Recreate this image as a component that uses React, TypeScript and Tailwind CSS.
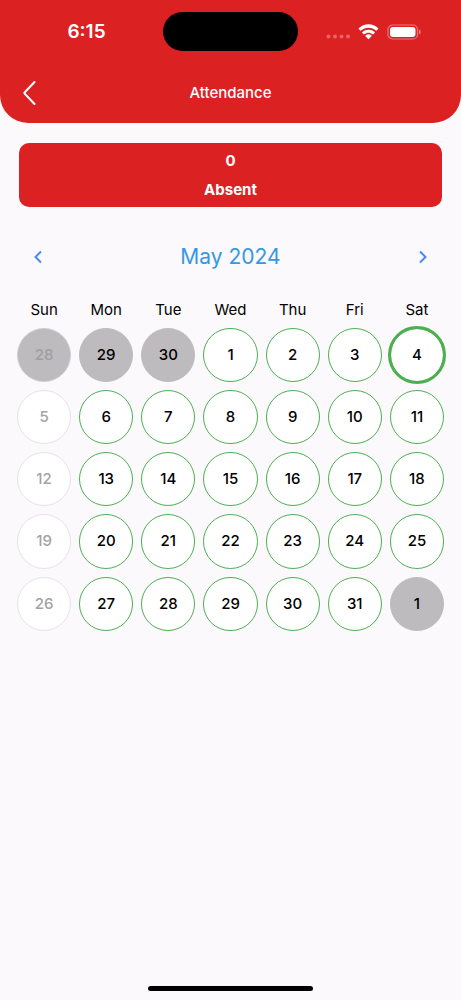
type DayState = "present" | "off" | "outside" | "outsideOff" | "today";

interface Day {
  date: number;
  month: string;
  state: DayState;
}

const WEEKDAYS = ["Sun", "Mon", "Tue", "Wed", "Thu", "Fri", "Sat"];

const DAY_STYLES: Record<DayState, string> = {
  present: "border border-[#4caf50] bg-white text-black",
  off: "border border-[#e6e3e8] bg-white text-[#a3a2a4]",
  outside: "border border-[#bdbbbe] bg-[#bdbbbe] text-black",
  outsideOff: "border border-[#d0ced2] bg-[#bdbbbe] text-[#a09ea1]",
  today:
    "border border-[#4caf50] bg-white text-black outline-3 -outline-offset-1 outline-[#4caf50]",
};

// Calendar starts on Sunday, 28 April 2024 and covers five weeks.
const DAYS: Day[] = Array.from({ length: 35 }, (_, i) => {
  const sunday = i % 7 === 0;
  if (i < 3) return { date: 28 + i, month: "April", state: sunday ? "outsideOff" : "outside" };
  if (i > 33) return { date: i - 33, month: "June", state: "outside" };
  const date = i - 2;
  return { date, month: "May", state: date === 4 ? "today" : sunday ? "off" : "present" };
});

const WEEKS = [0, 7, 14, 21, 28].map((start) => DAYS.slice(start, start + 7));

function StatusBar() {
  return (
    <div className="grid h-[63px] grid-cols-[1fr_135px_1fr] items-center">
      <span className="pl-2.5 text-center text-[19px] leading-6 font-semibold">6:15</span>
      <div className="h-[39px] rounded-full bg-black" />
      <div className="flex items-center justify-end gap-2 pr-10">
        <svg width="24" height="16" viewBox="0 0 24 16" fill="#fff" fillOpacity="0.3" aria-hidden="true">
          <circle cx="2.500" cy="12.500" r="2" />
          <circle cx="9" cy="12.500" r="2" />
          <circle cx="15.500" cy="12.500" r="2" />
          <circle cx="22" cy="12.500" r="2" />
        </svg>
        <svg width="21" height="16" viewBox="0.5 0 19 14.500" fill="#fff" aria-hidden="true">
          <path d="M10 3.3c2.6 0 5 1 6.8 2.7.2.2.4.2.6 0l1.4-1.4c.2-.2.2-.5 0-.7C16.4 1.600 13.300.300 10 .300S3.600 1.600 1.200 3.900c-.2.200-.2.500 0 .7L2.600 6c.2.200.4.200.6 0C5 4.300 7.400 3.300 10 3.300z" />
          <path d="M10 8c1.400 0 2.700.5 3.700 1.400.2.200.5.200.7 0l1.300-1.400c.2-.2.2-.5 0-.7A8.300 8.300 0 0 0 10 5.100a8.300 8.300 0 0 0-5.700 2.200c-.2.200-.2.500 0 .7l1.300 1.400c.2.200.5.200.7 0C7.300 8.500 8.600 8 10 8z" />
          <path d="M12.700 11.100c.2-.2.2-.5 0-.7a4.200 4.200 0 0 0-5.400 0c-.2.200-.2.500 0 .7l2.400 2.500c.2.200.4.200.6 0z" />
        </svg>
        <svg width="34" height="16" viewBox="0 0 34 16" fill="none" aria-hidden="true">
          <rect x="1" y="1" width="29.500" height="14" rx="4.500" stroke="#fff" strokeOpacity="0.4" strokeWidth="1.200" />
          <rect x="3" y="3" width="25.500" height="10" rx="3" fill="#fff" />
          <path d="M32 5.500c1 .4 1.600 1.300 1.600 2.500s-.6 2.100-1.600 2.500z" fill="#fff" fillOpacity="0.5" />
        </svg>
      </div>
    </div>
  );
}

function Header() {
  return (
    <header className="rounded-b-[28px] bg-[#dc2122] text-white">
      <StatusBar />
      <div className="grid h-[60px] grid-cols-[56px_1fr_56px] items-center">
        <button type="button" aria-label="Back" className="flex h-full items-center pl-[23px]">
          <svg width="14" height="26" viewBox="0 0 14 26" fill="none" aria-hidden="true">
            <path
              d="M11.500 2 1.800 12.200q-.8.800 0 1.600L11.500 24"
              stroke="#fff"
              strokeWidth="2"
              strokeLinecap="round"
              strokeLinejoin="round"
            />
          </svg>
        </button>
        <h1 className="text-center text-[15px] leading-5 font-medium">Attendance</h1>
      </div>
    </header>
  );
}

function Chevron({ d }: { d: string }) {
  return (
    <svg width="10" height="14" viewBox="0 0 10 14" fill="none" aria-hidden="true">
      <path d={d} stroke="#4a8af0" strokeWidth="2" />
    </svg>
  );
}

export default function App() {
  return (
    <div className="flex min-h-screen flex-col bg-[#fbf9fc] font-['Inter',sans-serif]">
      <Header />
      <main className="flex flex-col">
        <section className="mx-[19px] mt-5 rounded-[10px] bg-[#dc2122] py-[3px] text-center text-[15px] leading-[29px] font-bold text-white">
          <p>0</p>
          <p>Absent</p>
        </section>

        <div className="mt-8 flex h-9 items-center justify-between px-7">
          <button type="button" aria-label="Previous month" className="flex size-5 items-center justify-center">
            <Chevron d="M8 1.500 2.500 7 8 12.500" />
          </button>
          <h2 className="text-[21px] leading-8 text-[#3498e6]">May 2024</h2>
          <button type="button" aria-label="Next month" className="flex size-5 items-center justify-center">
            <Chevron d="M2 1.500 7.500 7 2 12.500" />
          </button>
        </div>

        <table className="mt-[25px] block px-[13px] text-[15px]">
          <thead className="block">
            <tr className="grid grid-cols-7">
              {WEEKDAYS.map((name) => (
                <th key={name} scope="col" className="text-center leading-5 font-normal text-black">
                  {name}
                </th>
              ))}
            </tr>
          </thead>
          <tbody className="block pt-1">
            {WEEKS.map((week) => (
              <tr key={`${week[0].month}-${week[0].date}`} className="grid grid-cols-7">
                {week.map((day) => (
                  <td key={day.date} className="p-1">
                    <button
                      type="button"
                      aria-label={`${day.date} ${day.month}`}
                      className={`flex aspect-square w-full items-center justify-center rounded-full leading-5 font-medium ${DAY_STYLES[day.state]}`}
                    >
                      {day.date}
                    </button>
                  </td>
                ))}
              </tr>
            ))}
          </tbody>
        </table>
      </main>
      <div className="mx-auto mt-auto mb-[9px] h-[5px] w-[165px] rounded-full bg-black" />
    </div>
  );
}
